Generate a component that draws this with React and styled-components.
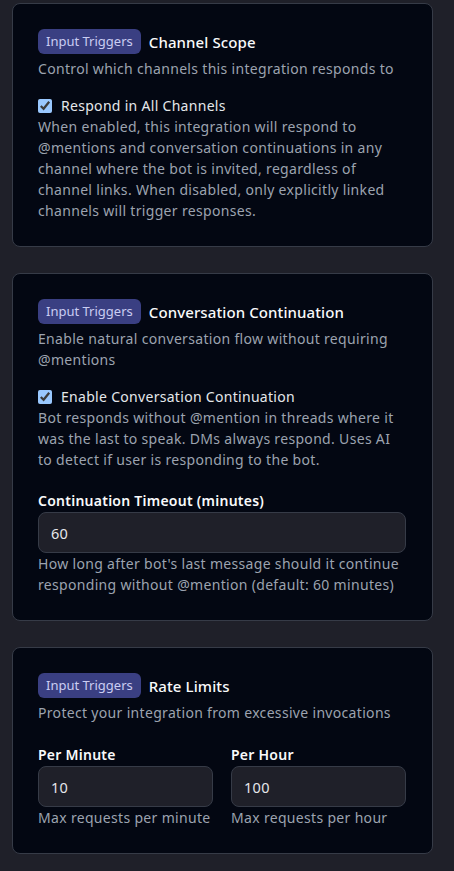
import React from 'react';
import styled, { createGlobalStyle } from 'styled-components';

const GlobalStyle = createGlobalStyle`
  html, body {
    margin: 0;
    padding: 0;
    background: #1f2029;
  }
  body {
    font-family: "Noto Sans", "Open Sans", sans-serif;
    color: #f3f4f6;
  }
`;

const Page = styled.div`
  padding: 3px 21px 0 12px;
  display: flex;
  flex-direction: column;
  gap: 26px;
`;

const Card = styled.section`
  background: #030712;
  border: 1px solid #363b47;
  border-radius: 8px;
  padding: 25px 26px 25px 25px;
`;

const Header = styled.div`
  display: flex;
  align-items: center;
  gap: 8px;
`;

const Badge = styled.span`
  background: #3a3f82;
  color: #cacdf3;
  font-size: 13px;
  line-height: 17px;
  padding: 4px 8px;
  border-radius: 6px;
`;

const Title = styled.h3`
  margin: 0;
  font-size: 15px;
  line-height: 20px;
  font-weight: 500;
  letter-spacing: 0.1px;
  color: #f9fafb;
`;

const Text = styled.p`
  margin: ${p => p.$top || 0}px 0 0;
  font-size: 14px;
  line-height: 21px;
  letter-spacing: 0.32px;
  color: #9ca3af;
`;

const CheckRow = styled.label`
  display: flex;
  align-items: center;
  margin-top: 16px;
  font-size: 14px;
  line-height: 21px;
  letter-spacing: 0.3px;
  color: #e5e7eb;
`;

const Box = styled.input.attrs({ type: 'checkbox' })`
  color-scheme: dark;
  width: 14px;
  height: 14px;
  margin: 0 9px 0 0;
`;

const Field = styled.div`
  margin-top: ${p => p.$top || 20}px;
  display: flex;
  flex-direction: column;
  min-width: 0;
`;

const Label = styled.label`
  font-size: 14px;
  line-height: 21px;
  font-weight: 600;
  letter-spacing: 0.25px;
  color: #f9fafb;
  margin-bottom: 1px;
`;

const Input = styled.input`
  box-sizing: border-box;
  width: 100%;
  height: 41px;
  background: #1f2029;
  border: 1px solid #363b47;
  border-radius: 8px;
  padding: 0 12px;
  font-family: inherit;
  font-size: 14.5px;
  letter-spacing: 0.3px;
  color: #e5e7eb;
  outline: none;
`;

const Grid = styled.div`
  display: grid;
  grid-template-columns: 1fr 1fr;
  gap: 18px;
`;

const SectionHead = ({ title, children }) => (
  <>
    <Header>
      <Badge>Input Triggers</Badge>
      <Title>{title}</Title>
    </Header>
    <Text $top={4}>{children}</Text>
  </>
);

export default function App() {
  return (
    <>
      <GlobalStyle />
      <Page>
        <Card>
          <SectionHead title="Channel Scope">
            Control which channels this integration responds to
          </SectionHead>
          <CheckRow>
            <Box defaultChecked />
            Respond in All Channels
          </CheckRow>
          <Text>
            When enabled, this integration will respond to @mentions and conversation
            continuations in any channel where the bot is invited, regardless of channel
            links. When disabled, only explicitly linked channels will trigger responses.
          </Text>
        </Card>

        <Card>
          <SectionHead title="Conversation Continuation">
            Enable natural conversation flow without requiring @mentions
          </SectionHead>
          <CheckRow>
            <Box defaultChecked />
            Enable Conversation Continuation
          </CheckRow>
          <Text>
            Bot responds without @mention in threads where it was the last to speak. DMs
            always respond. Uses AI to detect if user is responding to the bot.
          </Text>
          <Field>
            <Label>Continuation Timeout (minutes)</Label>
            <Input type="number" defaultValue="60" />
            <Text>
              How long after bot's last message should it continue responding without
              @mention (default: 60 minutes)
            </Text>
          </Field>
        </Card>

        <Card>
          <SectionHead title="Rate Limits">
            Protect your integration from excessive invocations
          </SectionHead>
          <Grid>
            <Field $top={21}>
              <Label>Per Minute</Label>
              <Input type="number" defaultValue="10" />
              <Text>Max requests per minute</Text>
            </Field>
            <Field $top={21}>
              <Label>Per Hour</Label>
              <Input type="number" defaultValue="100" />
              <Text>Max requests per hour</Text>
            </Field>
          </Grid>
        </Card>
      </Page>
    </>
  );
}
